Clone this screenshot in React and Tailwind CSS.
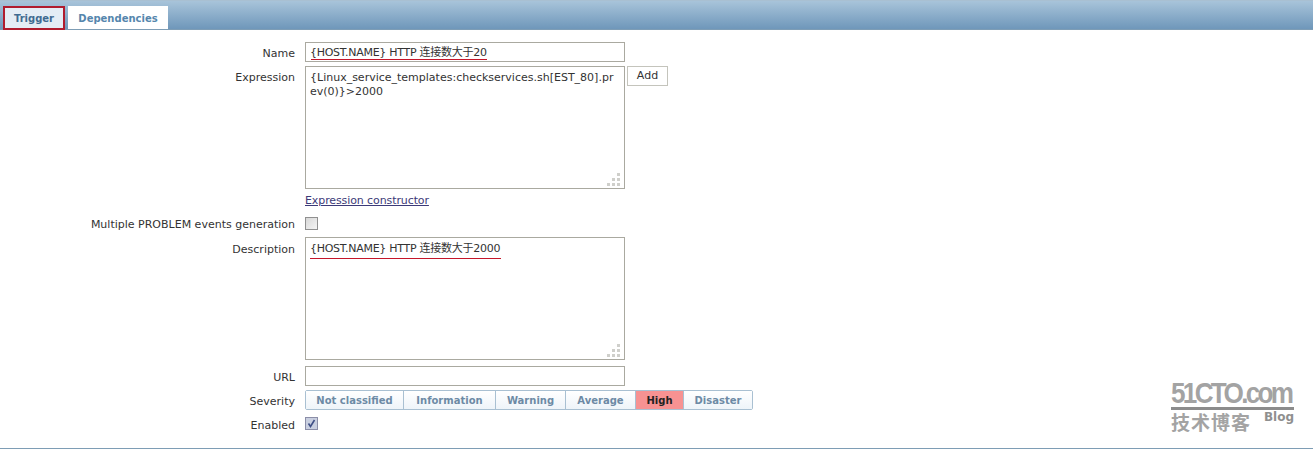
const font = { fontFamily: "'DejaVu Sans', 'Noto Sans CJK SC', sans-serif" };

const severities = [
  { label: "Not classified", w: "w-[98px]" },
  { label: "Information", w: "w-[92px]" },
  { label: "Warning", w: "w-[70px]" },
  { label: "Average", w: "w-[70px]" },
  { label: "High", w: "w-[48px]", active: true },
  { label: "Disaster", w: "w-[68px]" },
];

function Label({ children, className = "" }) {
  return <div className={`text-right text-[11px] leading-[14px] text-[#333] ${className}`}>{children}</div>;
}

function Grip() {
  return (
    <svg className="absolute right-[2px] bottom-[1px]" width="16" height="16" viewBox="0 0 16 16" fill="#cfcfcb">
      <rect x="11" y="2" width="3" height="3" />
      <rect x="6" y="7" width="3" height="3" />
      <rect x="11" y="7" width="3" height="3" />
      <rect x="1" y="12" width="3" height="3" />
      <rect x="6" y="12" width="3" height="3" />
      <rect x="11" y="12" width="3" height="3" />
    </svg>
  );
}

function Box({ children }) {
  return (
    <div className="relative w-[320px] h-[123px] border border-[#aaa9a0] bg-white pl-[4px] pr-[5px] pt-[4px] text-[11px] leading-[14px] text-[#333]">
      {children}
      <Grip />
    </div>
  );
}

function Logo() {
  return (
    <div className="absolute left-[1171px] top-[378px] w-[123px]">
      <div className="origin-left scale-x-[0.87] text-[30px] leading-[29px] font-bold tracking-[-3.1px] text-[#a3a3a3] [font-family:'Liberation_Sans',sans-serif] whitespace-nowrap">51CTO.com</div>
      <div className="h-[3px] bg-[#8c8c8c]" />
      <div className="flex items-start justify-between mt-[1px]">
        <span className="text-[19px] leading-[24px] font-bold text-[#a3a3a3] tracking-[1px] whitespace-nowrap">技术博客</span>
        <span className="-mt-[2px] text-[12px] leading-[16px] font-bold text-[#8f8f8f]">Blog</span>
      </div>
    </div>
  );
}

export default function App() {
  return (
    <div className="relative w-[1313px] h-[449px] overflow-hidden bg-white" style={font}>
      <div className="h-[30px] border-t border-[#a9c0d2] border-b-[#7e9db5] border-b bg-gradient-to-b from-[#a8c4da] to-[#6f97ba] flex items-end pl-[3px] gap-[3px]">
        <div className="w-[62px] h-[24px] mb-[-1px] border-2 border-[#b01c2e] bg-[#e4edf5] flex items-center justify-center pt-[1px] text-[10px] font-bold text-[#3f6b91]">
          Trigger
        </div>
        <div className="w-[100px] h-[23px] bg-white flex items-center justify-center pt-[2px] text-[10px] font-bold text-[#5586ad]">
          Dependencies
        </div>
      </div>

      <div className="grid grid-cols-[295px_1fr] gap-x-[10px] pt-[12px]">
        <Label className="pt-[5px]">Name</Label>
        <div className="relative w-[320px] h-[20px] border border-[#aaa9a0] pl-[4px] text-[11px] leading-[19px] tracking-[-0.27px] text-[#333]">
          {"{HOST.NAME} HTTP 连接数大于20"}
          <div className="absolute left-[5px] top-[16px] w-[176px] h-px bg-[#c4162a]" />
        </div>

        <Label className="pt-[5px] mt-[4px]">Expression</Label>
        <div className="flex items-start gap-[2px] mt-[4px]">
          <Box>
            {"{Linux_service_templates:checkservices.sh[EST_80].pr"}
            <br />
            {"ev(0)}>2000"}
          </Box>
          <div className="w-[41px] h-[20px] border border-[#c4c4bc] text-[11px] leading-[18px] text-center text-[#333]">Add</div>
        </div>

        <div />
        <div className="mt-[5px] h-[14px] text-[11px] leading-[14px] tracking-[-0.1px] text-[#3c3a78] underline">Expression constructor</div>

        <Label className="mt-[8px] pt-[2px]">Multiple PROBLEM events generation</Label>
        <div className="mt-[9px] w-[13px] h-[13px] border border-[#909090] bg-gradient-to-br from-[#d8d8d8] to-[#f4f4f4]" />

        <Label className="pt-[6px] mt-[5px]">Description</Label>
        <div className="mt-[5px] relative w-[320px] tracking-[-0.27px]">
          <Box>{"{HOST.NAME} HTTP 连接数大于2000"}</Box>
          <div className="absolute left-[5px] top-[21px] w-[191px] h-px bg-[#c4162a]" />
        </div>

        <Label className="pt-[5px] mt-[6px]">URL</Label>
        <div className="mt-[6px] w-[320px] h-[20px] border border-[#aaa9a0]" />

        <Label className="pt-[5px] mt-[4px]">Severity</Label>
        <div className="mt-[4px] flex h-[20px] w-fit rounded-[2px] border border-[#a9c0d2]">
          {severities.map((s) => (
            <div
              key={s.label}
              className={`${s.w} border-r border-[#a9c0d2] last:border-r-0 text-center text-[10px] leading-[19px] font-bold ${
                s.active ? "bg-[#f79292] text-[#222]" : "bg-gradient-to-b from-white to-[#eef4f9] text-[#6d8aa5]"
              }`}
            >
              {s.label}
            </div>
          ))}
        </div>

        <Label className="pt-[3px] mt-[6px]">Enabled</Label>
        <div className="mt-[7px] w-[13px] h-[13px] border border-[#8b8ea8] bg-[#c9cfe0] flex items-center justify-center">
          <svg width="9" height="9" viewBox="0 0 9 9" fill="none" stroke="#3f4f86" strokeWidth="1.6">
            <path d="M1.5 4.5 L3.5 7.5 L7.5 1" />
          </svg>
        </div>
      </div>

      <Logo />
      <div className="absolute left-0 right-0 bottom-0 h-[1px] bg-[#7e9db5]" />
    </div>
  );
}
